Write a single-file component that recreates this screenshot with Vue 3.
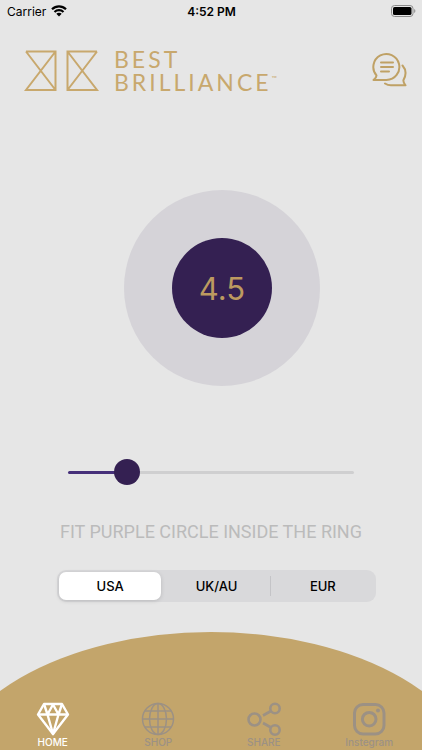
<template>
  <div class="screen">
    <div class="status-bar">
      <div class="carrier">
        <span>Carrier</span>
        <svg width="16" height="12" viewBox="0 0 16 12" fill="none" stroke="#000" stroke-width="2.2">
          <path d="M1 4.3C5 .4 11 .4 15 4.3" />
          <path d="M3.5 7C6 4.6 10 4.6 12.5 7" />
          <path d="M8 11.6 5.3 8.8C6.7 7.5 9.3 7.5 10.7 8.8Z" fill="#000" stroke="none" />
        </svg>
      </div>
      <span class="clock">4:52 PM</span>
      <div class="battery">
        <svg width="25" height="12" viewBox="0 0 25 12">
          <rect x="0.5" y="0.5" width="21.5" height="11" rx="3" fill="none" stroke="#8c8c8c" />
          <rect x="2" y="2" width="18.5" height="8" rx="1.6" fill="#000" />
          <path d="M23.2 4v4c1.6-.6 1.6-3.4 0-4z" fill="#8c8c8c" />
        </svg>
      </div>
    </div>

    <header class="header">
      <div class="brand">
        <svg width="76" height="42" viewBox="0 0 76 42" fill="none" stroke="#c8a86d" stroke-width="2">
          <path d="M2 1.500H31.500V40H2L31.500 1.500M2 1.500 31.500 40" />
          <path d="M73 1.500H43.500V40H73L43.500 1.500M73 1.500 43.500 40" />
        </svg>
        <p class="brand-name">BEST<br />BRILLIANCE<sup>™</sup></p>
      </div>
      <button class="chat-button" type="button" aria-label="Chat">
        <svg width="35" height="35" viewBox="0 0 35 35" fill="none" stroke="#bfa165" stroke-width="2" stroke-linecap="round" stroke-linejoin="round">
          <path d="M4.500 23.500A13 13 0 1 1 14.500 28H1.500C3.500 26.500 4.500 25 4.500 23.500Z" />
          <path d="M9 10.500h12M9 15h12M9 19.500h8" />
          <path d="M30.500 13.500C34.500 18 34 23.500 31.500 28C31 30 32 31.500 33.500 33.300H19C16.500 33.300 14.500 32.500 13 31.500" />
        </svg>
      </button>
    </header>

    <main class="sizer">
      <div class="ring">
        <div class="stone">{{ sizeLabel }}</div>
      </div>

      <input
        v-model.number="size"
        class="slider"
        type="range"
        :min="minSize"
        :max="maxSize"
        step="0.5"
        aria-label="Ring size"
        :style="{ '--fill': fillPercent + '%' }"
      />

      <p class="hint">FIT PURPLE CIRCLE INSIDE THE RING</p>

      <div class="segments" role="radiogroup" aria-label="Size system">
        <label
          v-for="item in regions"
          :key="item"
          class="segment"
          :class="{ active: region === item }"
        >
          <input v-model="region" type="radio" name="region" :value="item" />
          <span>{{ item }}</span>
        </label>
      </div>
    </main>

    <nav class="tab-bar">
      <a href="#home" class="tab active">
        <svg width="34" height="34" viewBox="0 0 34 34" fill="none" stroke="currentColor" stroke-width="2.4" stroke-linejoin="round">
          <path d="M8 2H26L32 12.500 17 32 2 12.500Z" />
          <path d="M2 12.500H32M8 2 11.500 12.500 17 2.500 22.500 12.500 26 2M11.500 12.500 17 32 22.500 12.500" />
        </svg>
        <span>HOME</span>
      </a>
      <a href="#shop" class="tab">
        <svg width="34" height="34" viewBox="0 0 34 34" fill="none" stroke="currentColor" stroke-width="1.500">
          <circle cx="17" cy="17" r="15.500" />
          <ellipse cx="17" cy="17" rx="8.500" ry="15.500" />
          <path d="M17 1.500V32.500M1.500 17H32.500M4 9H30M4 25H30" />
        </svg>
        <span>SHOP</span>
      </a>
      <a href="#share" class="tab">
        <svg width="34" height="34" viewBox="0 0 34 34" fill="none" stroke="currentColor" stroke-width="2.600">
          <circle cx="7.500" cy="17.500" r="6" />
          <circle cx="28" cy="6.500" r="4.700" />
          <circle cx="28" cy="28" r="4.700" />
          <path d="M16 13.500 24 9M16 21 24 25.500" />
        </svg>
        <span>SHARE</span>
      </a>
      <a href="#instagram" class="tab">
        <svg width="34" height="34" viewBox="0 0 34 34" fill="none" stroke="currentColor" stroke-width="3">
          <rect x="2.500" y="2.500" width="29.500" height="29.500" rx="8.500" />
          <circle cx="17.200" cy="17.200" r="6.800" />
          <circle cx="26" cy="8.500" r="2" fill="currentColor" stroke="none" />
        </svg>
        <span>Instegram</span>
      </a>
    </nav>
  </div>
</template>

<script setup>
import { ref, computed } from 'vue'

const minSize = 3
const maxSize = 11.5

const size = ref(4.5)
const regions = ['USA', 'UK/AU', 'EUR']
const region = ref('USA')

// Computed
const sizeLabel = computed(() => size.value.toFixed(1))

const fillPercent = computed(() => {
  return ((size.value - minSize) / (maxSize - minSize)) * 100
})
</script>

<style>
body {
  background: #e6e6e6;
}
</style>

<style scoped>
.screen {
  min-height: 100vh;
  display: flex;
  flex-direction: column;
  background: #e6e6e6;
  font-family: Inter, "Liberation Sans", sans-serif;
  color: #000;
}

.status-bar {
  display: grid;
  grid-template-columns: 1fr auto 1fr;
  align-items: center;
  height: 22px;
  padding: 0 6px 0 7px;
  font-size: 12px;
}

.carrier {
  display: flex;
  align-items: center;
  gap: 5px;
}

.clock {
  font-weight: 600;
}

.battery {
  display: flex;
  justify-content: flex-end;
}

.header {
  display: flex;
  justify-content: space-between;
  align-items: flex-start;
  height: 48px;
  padding: 26px 15px 0 24px;
}

.brand {
  display: flex;
  align-items: center;
  gap: 14px;
}

.brand-name {
  margin: 0;
  font-family: Lato, sans-serif;
  font-size: 23px;
  line-height: 23px;
  letter-spacing: 3px;
  color: #c8a86d;
}

.brand-name sup {
  font-size: 7px;
  line-height: 1;
  vertical-align: 10px;
  letter-spacing: 0;
}

.chat-button {
  display: flex;
  margin: 4px 0 0;
  padding: 0;
  border: none;
  background: none;
  cursor: pointer;
}

.sizer {
  flex: 1;
  display: flex;
  flex-direction: column;
  align-items: center;
  padding: 94px 46px 30px;
}

.ring {
  display: flex;
  align-items: center;
  justify-content: center;
  width: 196px;
  height: 196px;
  margin-left: 22px;
  border-radius: 50%;
  background: #d5d3d8;
}

.stone {
  display: flex;
  align-items: center;
  justify-content: center;
  width: 100px;
  height: 100px;
  border-radius: 50%;
  background: #342052;
  color: #bd9a60;
  font-size: 31px;
}

.slider {
  appearance: none;
  align-self: stretch;
  height: 26px;
  margin: 73px 22px 0;
  background: none;
  cursor: pointer;
}

.slider::-webkit-slider-runnable-track {
  height: 3px;
  border-radius: 2px;
  background: linear-gradient(to right, #46307a var(--fill), #cfcfd0 var(--fill));
}

.slider::-webkit-slider-thumb {
  appearance: none;
  width: 26px;
  height: 26px;
  margin-top: -12px;
  border-radius: 50%;
  background: #342052;
}

.hint {
  margin: 36px 0 0;
  font-family: Roboto, sans-serif;
  font-size: 18px;
  line-height: 22px;
  white-space: nowrap;
  color: #bbb;
}

.segments {
  align-self: stretch;
  display: grid;
  grid-template-columns: repeat(3, 1fr);
  height: 32px;
  margin-top: 27px;
  margin-left: 11px;
  border-radius: 9px;
  background: #d9d9db;
}

.segment {
  display: flex;
  align-items: center;
  justify-content: center;
  position: relative;
  margin: 2px;
  font-size: 13px;
  font-weight: 500;
  cursor: pointer;
}

.segment input {
  position: absolute;
  inset: 0;
  margin: 0;
  opacity: 0;
  cursor: pointer;
}

.segment.active {
  border-radius: 7px;
  background: #fff;
  box-shadow: 0 1px 4px rgba(0, 0, 0, 0.15);
}

.segment:not(.active) + .segment:not(.active)::before {
  content: "";
  position: absolute;
  left: -2px;
  top: 4px;
  bottom: 4px;
  width: 1px;
  background: #c4c4c7;
}

.tab-bar {
  display: grid;
  grid-template-columns: repeat(4, 1fr);
  padding-top: 70px;
  background: #c3a56b;
  clip-path: ellipse(64% 157px at 50% 157px);
}

.tab {
  display: flex;
  flex-direction: column;
  align-items: center;
  height: 48px;
  color: #9c9184;
  text-decoration: none;
  font-size: 10px;
  line-height: 12px;
  font-weight: 500;
}

.tab.active {
  color: #fff;
}
</style>
